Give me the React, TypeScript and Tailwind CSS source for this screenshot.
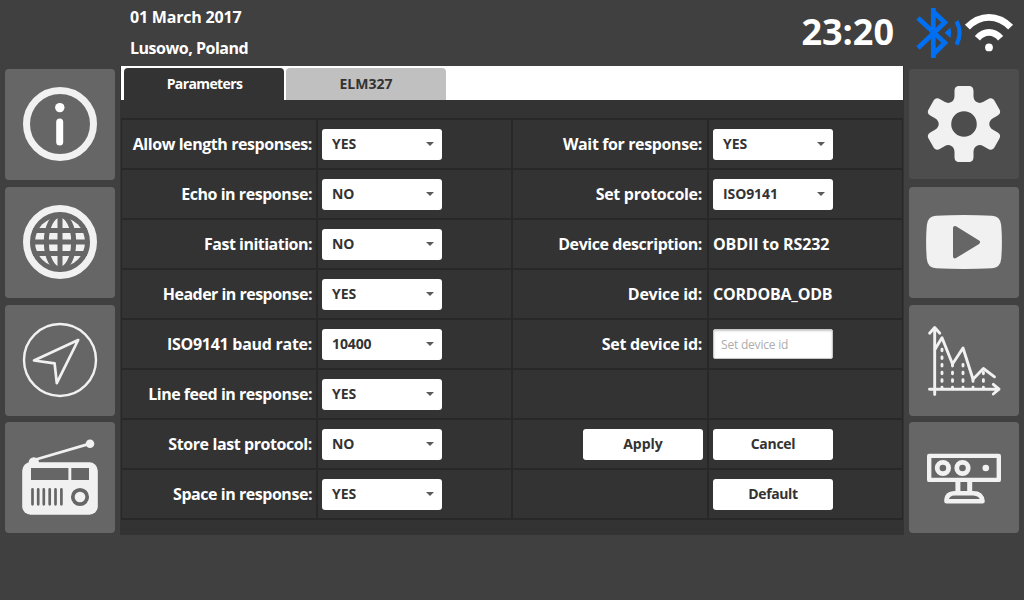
import type { ReactNode } from "react";

const LIGHT = "#f1f1f1";
const TILE = "#666666";

/* ---------- side-bar drawings, each on a 110 x 111 tile ---------- */

function InfoIcon() {
  return (
    <>
      <circle cx="55" cy="55" r="33.5" fill="none" stroke={LIGHT} strokeWidth="7" />
      <circle cx="54.8" cy="38.6" r="4.7" fill="#fff" />
      <rect x="51.2" y="49.5" width="7" height="27" rx="3.5" fill="#fff" />
    </>
  );
}

function GlobeIcon() {
  return (
    <>
      <circle cx="55" cy="55" r="33.5" fill="none" stroke={LIGHT} strokeWidth="7" />
      <circle cx="55" cy="55" r="25" fill={LIGHT} />
      <g fill="none" stroke={TILE} strokeWidth="5">
        <path d="M28 43.4H82M28 55H82M28 66.6H82M55 28V82" />
        <ellipse cx="55" cy="55" rx="13.7" ry="27" />
      </g>
    </>
  );
}

function NavigationIcon() {
  return (
    <g fill="none" stroke={LIGHT} strokeLinejoin="round">
      <circle cx="55" cy="55" r="36" strokeWidth="2.4" />
      <path d="M73.2 35L29 55.5L49.6 58.4L51.8 78.2Z" strokeWidth="2.7" />
    </g>
  );
}

const RADIO_SLOTS = [27.5, 33.2, 38.8, 44.7, 50.5, 56.4];

function RadioIcon() {
  return (
    <>
      <path d="M29 38L85 21.7" stroke={LIGHT} strokeWidth="2.8" />
      <circle cx="85" cy="21.7" r="4.3" fill={LIGHT} />
      <path d="M23.6 42V40.5A5.2 5.2 0 0 1 34 40.5V42Z" fill={LIGHT} />
      <rect x="17.2" y="40.3" width="75.6" height="52.4" rx="8.5" fill={LIGHT} />
      <path d="M26 46H63.4V58H26ZM66.3 46H84V58H66.3Z" fill={TILE} />
      <path
        d={RADIO_SLOTS.map((x) => `M${x} 67.4V82.3`).join("")}
        stroke={TILE}
        strokeWidth="2.7"
        strokeLinecap="round"
      />
      <circle cx="75" cy="75" r="7.2" fill="none" stroke={TILE} strokeWidth="3.7" />
    </>
  );
}

function gearPath() {
  const pt = (x: number, y: number, k: number) => {
    const a = (k * Math.PI) / 3;
    const px = 55 + x * Math.cos(a) - y * Math.sin(a);
    const py = 55 + x * Math.sin(a) + y * Math.cos(a);
    return `${px.toFixed(2)} ${py.toFixed(2)}`;
  };
  let d = `M${pt(-12.65, -21.9, 0)}`;
  for (let k = 0; k < 6; k++) {
    d += `C${pt(-10.5, -23.1, k)} ${pt(-9.5, -25.5, k)} ${pt(-9.5, -28, k)}`;
    d += `L${pt(-9.5, -32.5, k)}`;
    d += `C${pt(-9.5, -36.5, k)} ${pt(-8, -38, k)} ${pt(-4.5, -38, k)}`;
    d += `L${pt(4.5, -38, k)}`;
    d += `C${pt(8, -38, k)} ${pt(9.5, -36.5, k)} ${pt(9.5, -32.5, k)}`;
    d += `L${pt(9.5, -28, k)}`;
    d += `C${pt(9.5, -25.5, k)} ${pt(10.5, -23.1, k)} ${pt(12.65, -21.9, k)}`;
  }
  return `${d}Z M67.8 55A12.8 12.8 0 1 0 42.2 55A12.8 12.8 0 1 0 67.8 55Z`;
}

function GearIcon() {
  return <path d={gearPath()} fill={LIGHT} fillRule="evenodd" />;
}

function VideoIcon() {
  return (
    <>
      <path
        d="M27 28.8Q55 27.4 83 28.8Q91.3 29.3 92.2 38Q93.6 55 92.2 72Q91.3 80.7 83 81.3Q55 82.8 27 81.3Q18.7 80.7 17.8 72Q16.4 55 17.8 38Q18.7 29.3 27 28.8Z"
        fill={LIGHT}
      />
      <path d="M46 41L69 55.2L46 69.4Z" fill={TILE} stroke={TILE} strokeWidth="4" strokeLinejoin="round" />
    </>
  );
}

function ChartIcon() {
  const dashes: [number, number[]][] = [
    [33, [45, 52.7, 60.3, 68, 75.6, 83]],
    [43.5, [60.3, 68, 75.6, 83]],
    [54, [60.3, 68, 75.6, 83]],
    [64, [75.6, 83]],
    [74.4, [68, 75.6, 83]],
  ];
  return (
    <g fill="none" stroke={LIGHT} strokeWidth="2.9" strokeLinecap="round" strokeLinejoin="round">
      <path d="M25.7 23V89.5M20.5 84.2H90M20.6 28.2L25.7 22.6L30.8 28.2M84.3 79.4L90 84.2L84.3 89" />
      <path d="M26 44.2L33 32.7L43.5 59L54 43L64 74.3L74.4 63.5L85.5 71.8" />
      <path d={dashes.map(([x, ys]) => ys.map((y) => `M${x} ${y - 0.8}V${y + 0.8}`).join("")).join("")} />
    </g>
  );
}

function SensorIcon() {
  return (
    <g fill="none" stroke={LIGHT} strokeWidth="4.4" strokeLinejoin="round">
      <rect x="20.2" y="33.9" width="69.6" height="24" />
      <circle cx="33.9" cy="46" r="5.7" strokeWidth="4.8" />
      <circle cx="53.5" cy="46" r="5.7" strokeWidth="4.8" />
      <circle cx="76.8" cy="46" r="3.3" fill={LIGHT} stroke="none" />
      <path d="M48.9 58V71M60.7 58V71" strokeWidth="5" />
      <path d="M37.4 79.2C37.4 73.5 41 71.2 46 71.2H64C69 71.2 73 73.5 73.6 79.2Z" />
    </g>
  );
}

function SideButton({ label, active, children }: { label: string; active?: boolean; children: ReactNode }) {
  return (
    <button
      aria-label={label}
      className={`block w-[110px] rounded-[4px] ${active ? "mb-px h-[110px] bg-[#4d4d4d]" : "h-[111px] bg-[#666666]"}`}
    >
      <svg viewBox="0 0 110 111" className="block h-[111px] w-[110px]">
        {children}
      </svg>
    </button>
  );
}

/* ---------- status icons ---------- */

function BluetoothIcon() {
  return (
    <svg viewBox="0 0 48 52" className="h-[52px] w-[48px]">
      <g fill="none" stroke="#006ff2" strokeWidth="4.8">
        <path d="M17.3 1V51" />
        <path d="M2 11L28.8 35.8L17.4 47.2M17.4 4.8L28.8 15.6L2 41" />
        <path d="M40.6 14.2Q46.6 25.8 40.6 37.6" strokeWidth="4.2" />
      </g>
      <path d="M28.6 25.8L34.4 20.5Q36 25.8 34.4 31Z" fill="#006ff2" />
    </svg>
  );
}

function WifiIcon() {
  return (
    <svg viewBox="0 0 50 46" className="h-[46px] w-[50px]">
      <g fill="none" stroke="#fff" strokeWidth="6.9">
        <path d="M3.4 19.2Q13 9.4 25 9.4T46.6 19.2" />
        <path d="M13.4 30.2Q18.6 24.4 25 24.4T36.6 30.2" />
      </g>
      <circle cx="25" cy="39.4" r="3.9" fill="#fff" />
    </svg>
  );
}

/* ---------- form parts ---------- */

function Select({ value }: { value: string }) {
  return (
    <button className="flex h-[31px] w-[120px] items-center justify-between rounded-[3px] bg-white pr-[8px] pb-[2px] pl-[10px] text-[14px] font-bold text-[#333333]">
      <span className="tracking-[-0.1px]">{value}</span>
      <svg viewBox="0 0 8 4" className="h-[4px] w-[8px]">
        <path d="M0 0H8L4 4Z" fill="#5a5a5a" />
      </svg>
    </button>
  );
}

function ActionButton({ children, track }: { children: string; track: string }) {
  return (
    <button className="h-[31px] w-[120px] rounded-[3px] bg-white pb-[3px] text-[14px] font-bold text-[#333333]">
      <span className={track}>{children}</span>
    </button>
  );
}

type Field = { label?: string; track?: string; left?: ReactNode; right?: ReactNode };

const rows: [Field, Field][] = [
  [
    { label: "Allow length responses:", track: "tracking-[-0.43px]", right: <Select value="YES" /> },
    { label: "Wait for response:", track: "tracking-[-0.38px]", right: <Select value="YES" /> },
  ],
  [
    { label: "Echo in response:", track: "tracking-[-0.45px]", right: <Select value="NO" /> },
    { label: "Set protocole:", track: "tracking-[-0.3px]", right: <Select value="ISO9141" /> },
  ],
  [
    { label: "Fast initiation:", track: "tracking-[-0.51px]", right: <Select value="NO" /> },
    {
      label: "Device description:",
      track: "tracking-[-0.43px]",
      right: <span className="pb-[2px] tracking-[-0.12px]">OBDII to RS232</span>,
    },
  ],
  [
    { label: "Header in response:", track: "tracking-[-0.52px]", right: <Select value="YES" /> },
    {
      label: "Device id:",
      track: "tracking-[-0.25px]",
      right: <span className="pb-[2px] tracking-[-0.22px]">CORDOBA_ODB</span>,
    },
  ],
  [
    { label: "ISO9141 baud rate:", track: "tracking-[-0.28px]", right: <Select value="10400" /> },
    {
      label: "Set device id:",
      track: "tracking-[-0.3px]",
      right: (
        <input
          placeholder="Set device id"
          className="mb-px h-[30px] w-[120px] rounded-[2px] border border-[#c8c8c8] bg-white px-[7px] text-[12px] font-normal tracking-[-0.2px] shadow-[inset_0_1px_2px_#c8c8c8] placeholder:text-[#adadad]"
        />
      ),
    },
  ],
  [{ label: "Line feed in response:", track: "tracking-[-0.47px]", right: <Select value="YES" /> }, {}],
  [
    { label: "Store last protocol:", track: "tracking-[-0.41px]", right: <Select value="NO" /> },
    {
      left: <ActionButton track="">Apply</ActionButton>,
      right: <ActionButton track="tracking-[-0.3px]">Cancel</ActionButton>,
    },
  ],
  [
    { label: "Space in response:", track: "tracking-[-0.46px]", right: <Select value="YES" /> },
    { right: <ActionButton track="tracking-[-0.4px]">Default</ActionButton> },
  ],
];

const cell = "flex h-[50px] items-center border border-[#282828] pt-px";

function FieldCells({ field, labelPad }: { field: Field; labelPad: string }) {
  return (
    <>
      <div className={`${cell} justify-end pr-[4px]`}>
        {field.label ? <span className={`pb-[2px] ${labelPad} ${field.track}`}>{field.label}</span> : field.left}
      </div>
      <div className={`${cell} pl-[4px]`}>{field.right}</div>
    </>
  );
}

export default function App() {
  return (
    <div className="flex h-[600px] w-[1024px] flex-col overflow-hidden bg-[#404040] font-['Open_Sans','Noto_Sans',sans-serif] text-[16px] font-bold whitespace-nowrap text-white">
      <header className="flex h-[66px] justify-between pr-[10px] pl-[130px]">
        <div className="flex flex-col gap-[7px] pt-[5px]">
          <span className="leading-6 tracking-[-0.2px]">01 March 2017</span>
          <span className="leading-6 tracking-[-0.48px]">Lusowo, Poland</span>
        </div>
        <div className="flex items-start">
          <span className="pt-[8px] text-[36px] leading-[48px]">23:20</span>
          <div className="flex items-start pt-[7px] pl-[22px]">
            <BluetoothIcon />
            <div className="pt-px">
              <WifiIcon />
            </div>
          </div>
        </div>
      </header>

      <div className="flex px-[5px]">
        <nav className="flex flex-col gap-[7px] pt-[3px]">
          <SideButton label="Information"><InfoIcon /></SideButton>
          <SideButton label="Internet"><GlobeIcon /></SideButton>
          <div className="-mb-px"><SideButton label="Navigation"><NavigationIcon /></SideButton></div>
          <SideButton label="Radio"><RadioIcon /></SideButton>
        </nav>

        <main className="mx-[5px] h-[469px] w-[784px] bg-[#333333] px-px">
          <div className="flex h-[34px] gap-[2px] bg-white pt-[2px] pl-[3px] text-[14px]">
            <button className="w-[160px] rounded-t-[4px] bg-[#333333] pb-[2px] pl-px tracking-[-0.6px] text-white">Parameters</button>
            <button className="w-[160px] rounded-t-[4px] bg-[#c0c0c0] pb-[2px] text-[#333333]">ELM327</button>
          </div>
          <div className="mt-[18px] grid grid-cols-[196px_195px_196px_195px] border-y border-[#282828]">
            {rows.map(([a, b], i) => (
              <div key={i} className="contents">
                <FieldCells field={a} labelPad="" />
                <FieldCells field={b} labelPad="pr-px" />
              </div>
            ))}
          </div>
        </main>

        <nav className="flex flex-col gap-[7px] pt-[3px]">
          <SideButton label="Settings" active><GearIcon /></SideButton>
          <SideButton label="Video"><VideoIcon /></SideButton>
          <div className="-mb-px"><SideButton label="Diagnostics"><ChartIcon /></SideButton></div>
          <SideButton label="Sensor"><SensorIcon /></SideButton>
        </nav>
      </div>
    </div>
  );
}
